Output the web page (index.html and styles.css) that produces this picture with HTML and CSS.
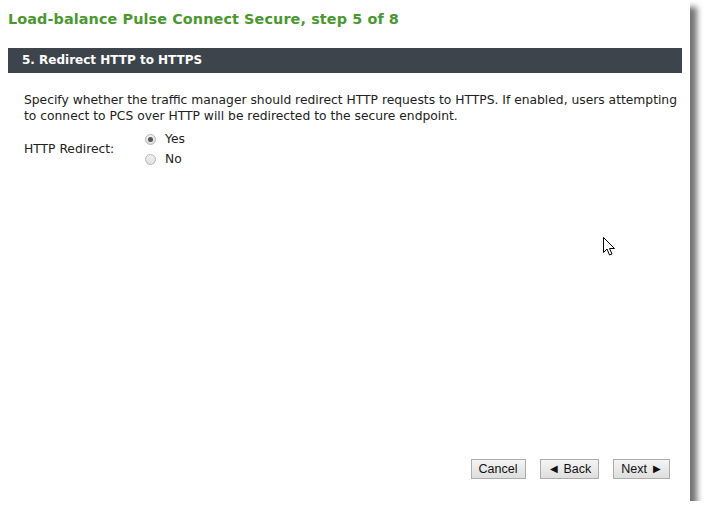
FILE: index.html
```html
<!DOCTYPE html>
<html lang="en">
<head>
    <meta charset="UTF-8">
    <title>Load-balance Pulse Connect Secure</title>
    <link rel="stylesheet" href="styles.css">
</head>
<body>
<div class="window">
    <h1 class="title">Load-balance Pulse Connect Secure, step 5 of 8</h1>
    <div class="bar">5. Redirect HTTP to HTTPS</div>
    <div class="content">
        <p class="desc">Specify whether the traffic manager should redirect HTTP requests to HTTPS. If enabled, users attempting to connect to PCS over HTTP will be redirected to the secure endpoint.</p>
        <div class="field">
            <span class="label">HTTP Redirect:</span>
            <div class="options">
                <label class="opt"><span class="radio on"></span>Yes</label>
                <label class="opt"><span class="radio"></span>No</label>
            </div>
        </div>
    </div>
    <div class="footer">
        <button class="btn">Cancel</button>
        <button class="btn"><span class="arr left">&#9664;</span>Back</button>
        <button class="btn">Next<span class="arr right">&#9654;</span></button>
    </div>
    <svg class="cursor" width="13" height="20" viewBox="0 0 13 20">
        <path d="M0.5 0.5 L0.5 15.5 L4 12 L6.5 18 L9 17 L6.5 11.5 L11.5 11.5 Z" fill="#fff" stroke="#000" stroke-width="1"/>
    </svg>
</div>
</body>
</html>
```

FILE: styles.css
```css
body { margin: 0; background-color: #ffffff; }
.window { position: relative; width: 690px; height: 501px; background: #ffffff; box-shadow: 7px 7px 6px rgba(0, 0, 0, 0.55); display: flex; flex-direction: column; font-family: "DejaVu Sans", Verdana, sans-serif; }
.title { margin: 0; padding: 11px 0 0 8px; height: 48px; box-sizing: border-box; font-size: 14.4px; font-weight: bold; color: #4a982f; letter-spacing: 0.1px; }
.bar { margin: 0 8px; width: 674px; height: 25px; box-sizing: border-box; padding: 5px 0 0 14px; background: #3e444c; color: #ffffff; font-size: 12px; font-weight: bold; }
.content { padding: 19px 0 0 24px; color: #222222; }
.desc { margin: 0; width: 660px; line-height: 16px; font-size: 12.3px; }
.field { display: flex; align-items: center; margin-top: 7px; }
.label { width: 121px; font-size: 12.3px; }
.options { display: flex; flex-direction: column; gap: 4px; }
.opt { display: flex; align-items: center; gap: 9px; height: 16px; font-size: 12.3px; }
.radio { width: 11px; height: 11px; border: 1px solid #b7b7b7; border-radius: 50%; background: linear-gradient(#f0f0f0, #e0e0e0); box-sizing: border-box; display: flex; align-items: center; justify-content: center; }
.radio.on::after { content: ""; width: 5px; height: 5px; border-radius: 50%; background: #555555; }
.footer { margin-top: auto; display: flex; justify-content: flex-end; gap: 14px; padding: 0 20px 22px 0; }
.btn { height: 20px; padding: 0 7px; font-family: "Liberation Sans", Arial, sans-serif; font-size: 12.5px; color: #111111; background: linear-gradient(#f4f4f4, #dedede); border: 1px solid #adadad; border-radius: 0; }
.arr { font-size: 10px; vertical-align: 1px; }
.arr.left { margin: 0 6px 0 2px; }
.arr.right { margin: 0 1px 0 6px; }
.cursor { position: absolute; left: 603px; top: 237px; }
```
